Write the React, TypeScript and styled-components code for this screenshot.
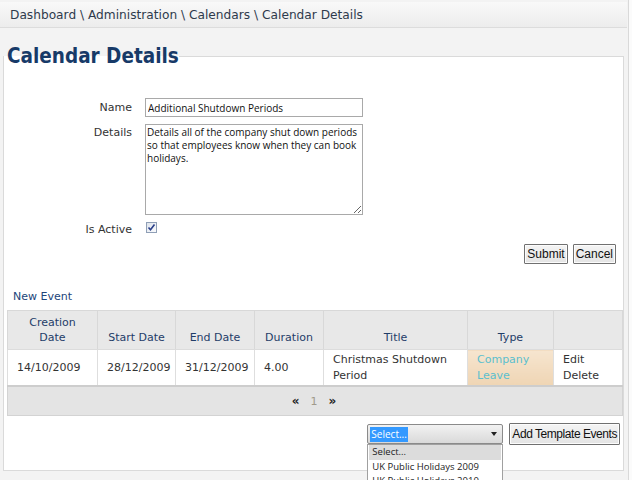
import React from "react";
import styled, { createGlobalStyle } from "styled-components";

const GlobalStyle = createGlobalStyle`
  html, body { margin: 0; padding: 0; }
  body {
    background: #fbfbfb;
    font-family: "DejaVu Sans", Verdana, sans-serif;
    overflow: hidden;
  }
`;

const Window = styled.div`
  width: 629px;
  height: 480px;
  background: #f3f3f3;
  border-right: 1px solid #d9d9d9;
  box-sizing: border-box;
  padding-top: 2px;
  position: relative;
  overflow: hidden;
`;

const Breadcrumb = styled.div`
  height: 25px;
  display: flex;
  align-items: center;
  padding-left: 10px;
  background: linear-gradient(#f9f9f9, #ececec);
  border-bottom: 1px solid #dcdcdc;
  font-size: 12.2px;
  color: #2e3a4c;
  margin-right: 1px;
`;

const Fieldset = styled.fieldset`
  margin: 16px 4px 0 3px;
  padding: 0;
  border: 1px solid #dadada;
  background: #fff;
  height: 427px;
  box-sizing: border-box;
  position: relative;
`;

const Legend = styled.legend`
  padding: 0 0 0 3px;
  margin-left: 0;
  font-family: "DejaVu Sans Condensed", "DejaVu Sans", sans-serif;
  font-weight: bold;
  font-size: 20.5px;
  color: #173a68;
`;

const Form = styled.div`
  display: grid;
  grid-template-columns: 128px 218px;
  column-gap: 13px;
  row-gap: 7px;
  padding-top: 30px;
  align-items: start;
`;

const Label = styled.label<{ $top?: number }>`
  justify-self: end;
  font-size: 11px;
  color: #333;
  padding-top: ${(p) => p.$top ?? 3}px;
`;

const TextInput = styled.input`
  width: 218px;
  height: 19px;
  box-sizing: border-box;
  border: 1px solid #a9a9a9;
  font-family: "Open Sans", sans-serif;
  font-size: 10px;
  color: #111;
  padding: 0 2px;
  margin: 0;
  outline: none;
`;

const TextArea = styled.textarea`
  width: 218px;
  height: 91px;
  box-sizing: border-box;
  border: 1px solid #a9a9a9;
  font-family: "Open Sans", sans-serif;
  font-size: 10px;
  line-height: 13px;
  color: #111;
  padding: 1px 1px;
  margin: 0;
  resize: both;
  outline: none;
`;

const Check = styled.span`
  width: 11px;
  height: 11px;
  box-sizing: border-box;
  border: 1px solid #8f9fb6;
  background: linear-gradient(135deg, #dfe4ec, #fafbfd);
  display: flex;
  align-items: center;
  justify-content: center;
  margin-left: 1px;
`;

const ButtonRow = styled.div`
  display: flex;
  justify-content: flex-end;
  gap: 5px;
  padding: 8px 7px 0 0;
`;

const Button = styled.button`
  font-family: "Liberation Sans", Arial, sans-serif;
  font-size: 12px;
  height: 20px;
  padding: 0 2px;
  border: 1px solid #707070;
  box-shadow: inset 0 0 0 1px #fcfcfc;
  background: linear-gradient(#f4f4f4, #e4e4e4);
  color: #111;
  border-radius: 1px;
`;

const NewEvent = styled.a`
  display: block;
  font-size: 11px;
  color: #22457a;
  padding: 26px 0 0 9px;
  text-decoration: none;
`;

const Table = styled.table`
  margin: 7px 0 0 3px;
  width: 615px;
  border-collapse: collapse;
  table-layout: fixed;
  font-size: 11px;
  border: 1px solid #d3d3d3;
`;

const Th = styled.th`
  background: #e8e8e8;
  color: #1f3d68;
  font-weight: normal;
  text-align: center;
  vertical-align: bottom;
  line-height: 15px;
  padding: 4px 10px 4px;
  border: 1px solid #d8d8d8;
  border-bottom-color: #dcdcdc;
`;

const Td = styled.td<{ $type?: boolean }>`
  background: ${(p) => (p.$type ? "linear-gradient(#f6e5cf, #efd5b4)" : "#fff")};
  color: ${(p) => (p.$type ? "#5bbfce" : "#333")};
  line-height: 16px;
  padding: 2px 9px 1px;
  vertical-align: middle;
  border: 1px solid #dedede;
  border-bottom: 2px solid #cdcdcd;
`;

const PagerCell = styled.td`
  background: #e4e4e4;
  height: 28px;
  text-align: center;
  padding: 0;
  font-size: 11px;
`;

const Pager = styled.div`
  display: flex;
  justify-content: center;
  align-items: center;
  gap: 11px;
  color: #222;
  padding-right: 2px;
`;

const PageArrow = styled.span`
  font-weight: bold;
  font-size: 12px;
`;

const PageNum = styled.span`
  color: #a09a8a;
`;

const TemplateRow = styled.div`
  display: flex;
  justify-content: flex-end;
  align-items: center;
  gap: 6px;
  padding: 7px 3px 0 0;
  position: relative;
`;

const SelectWrap = styled.div`
  position: relative;
`;

const SelectBox = styled.div`
  width: 136px;
  height: 20px;
  box-sizing: border-box;
  border: 1px solid #8a8a8a;
  border-radius: 2px;
  background: linear-gradient(#f2f2f2, #d9d9d9);
  display: flex;
  align-items: center;
  justify-content: space-between;
  padding: 0 5px 0 2px;
  font-family: "Open Sans", sans-serif;
  font-size: 10px;
`;

const Highlight = styled.span`
  background: #3399ff;
  color: #fff;
  padding: 0 1px;
  line-height: 15px;
`;

const Arrow = styled.span`
  width: 0;
  height: 0;
  border-left: 3.5px solid transparent;
  border-right: 3.5px solid transparent;
  border-top: 4px solid #222;
`;

const Dropdown = styled.ul`
  position: absolute;
  top: 20px;
  left: 0;
  width: 136px;
  box-sizing: border-box;
  margin: 0;
  padding: 0 1px;
  list-style: none;
  background: #fff;
  border: 1px solid #a0a0a0;
  font-family: "Open Sans", sans-serif;
  font-size: 9.5px;
  color: #222;
  z-index: 2;
`;

const Option = styled.li<{ $active?: boolean }>`
  height: 14.5px;
  line-height: 14.5px;
  padding-left: 3px;
  background: ${(p) => (p.$active ? "#dcdcdc" : "#fff")};
`;

const TemplateButton = styled(Button)`
  height: 22px;
  padding: 0 2px;
  letter-spacing: -0.45px;
`;

export default function App() {
  return (
    <>
      <GlobalStyle />
      <Window>
        <Breadcrumb>Dashboard \ Administration \ Calendars \ Calendar Details</Breadcrumb>
        <Fieldset>
          <Legend>Calendar Details</Legend>
          <Form>
            <Label $top={3}>Name</Label>
            <TextInput defaultValue="Additional Shutdown Periods" />
            <Label $top={2}>Details</Label>
            <TextArea defaultValue={"Details all of the company shut down periods so that employees know when they can book holidays."} />
            <Label $top={1}>Is Active</Label>
            <Check>
              <svg width="9" height="9" viewBox="0 0 9 9">
                <path d="M1.5 4.5 L3.5 6.8 L7.5 1.5" fill="none" stroke="#2a3f8a" strokeWidth="1.6" />
              </svg>
            </Check>
          </Form>
          <ButtonRow>
            <Button>Submit</Button>
            <Button>Cancel</Button>
          </ButtonRow>
          <NewEvent href="#">New Event</NewEvent>
          <Table>
            <colgroup>
              <col style={{ width: 90 }} />
              <col style={{ width: 78 }} />
              <col style={{ width: 79 }} />
              <col style={{ width: 69 }} />
              <col style={{ width: 144 }} />
              <col style={{ width: 86 }} />
              <col style={{ width: 69 }} />
            </colgroup>
            <thead>
              <tr>
                <Th>Creation Date</Th>
                <Th>Start Date</Th>
                <Th>End Date</Th>
                <Th>Duration</Th>
                <Th>Title</Th>
                <Th>Type</Th>
                <Th></Th>
              </tr>
            </thead>
            <tbody>
              <tr>
                <Td>14/10/2009</Td>
                <Td>28/12/2009</Td>
                <Td>31/12/2009</Td>
                <Td>4.00</Td>
                <Td>Christmas Shutdown Period</Td>
                <Td $type>Company Leave</Td>
                <Td>Edit<br />Delete</Td>
              </tr>
              <tr>
                <PagerCell colSpan={7}>
                  <Pager>
                    <PageArrow>«</PageArrow>
                    <PageNum>1</PageNum>
                    <PageArrow>»</PageArrow>
                  </Pager>
                </PagerCell>
              </tr>
            </tbody>
          </Table>
          <TemplateRow>
            <SelectWrap>
              <SelectBox>
                <Highlight>Select...</Highlight>
                <Arrow />
              </SelectBox>
              <Dropdown>
                <Option $active>Select...</Option>
                <Option>UK Public Holidays 2009</Option>
                <Option>UK Public Holidays 2010</Option>
              </Dropdown>
            </SelectWrap>
            <TemplateButton>Add Template Events</TemplateButton>
          </TemplateRow>
        </Fieldset>
      </Window>
    </>
  );
}
